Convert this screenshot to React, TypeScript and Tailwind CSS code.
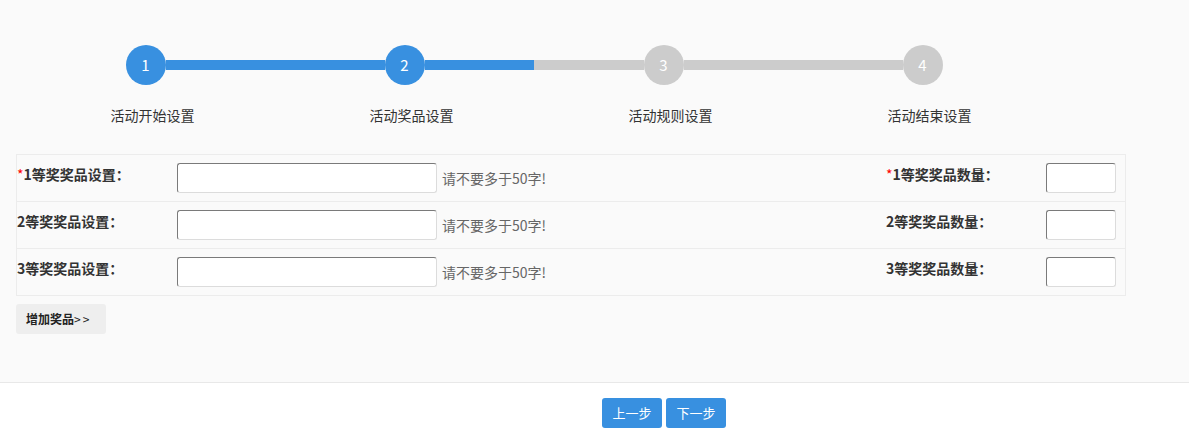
import React from "react";

const STEPS = [
  { n: 1, label: "活动开始设置", left: "", right: "blue" },
  { n: 2, label: "活动奖品设置", left: "blue", right: "blue" },
  { n: 3, label: "活动规则设置", left: "gray", right: "gray" },
  { n: 4, label: "活动结束设置", left: "gray", right: "" },
];

const PRIZES = [
  { rank: 1, required: true },
  { rank: 2, required: false },
  { rank: 3, required: false },
];

function lineClass(c: string) {
  if (c === "blue") return "h-[10px] flex-1 bg-[#3890e0]";
  if (c === "gray") return "h-[10px] flex-1 bg-[#cccccc]";
  return "h-[10px] flex-1";
}

function Steps() {
  return (
    <div className="flex pl-4 pt-[45px]">
      {STEPS.map((s) => (
        <div key={s.n} className="w-[259px] flex flex-col">
          <div className="flex items-center">
            <div className={lineClass(s.left)} />
            <div
              className={
                "w-10 h-10 rounded-full flex items-center justify-center text-white text-[15px] " +
                (s.n <= 2 ? "bg-[#3890e0]" : "bg-[#cccccc]")
              }
            >
              {s.n}
            </div>
            <div className={lineClass(s.right)} />
          </div>
          <div className="mt-5 pl-[14px] text-center text-[14px] leading-5 text-[#333]">
            {s.label}
          </div>
        </div>
      ))}
    </div>
  );
}

function Input({ w }: { w: string }) {
  return (
    <input
      type="text"
      className={
        w +
        " h-[30px] bg-white rounded-[3px] border border-t-[#7a7a7a] border-l-[#7a7a7a] border-r-[#dcdcdc] border-b-[#dcdcdc] outline-none"
      }
    />
  );
}

export default function App() {
  return (
    <div
      className="w-[1189px] h-[439px] bg-white"
      style={{ fontFamily: '"Noto Sans CJK SC", "Noto Sans", sans-serif' }}
    >
      <div className="h-[383px] bg-[#fafafa] border-b border-[#e8e8e8]">
        <Steps />

        {/* prize table */}
        <div className="mt-[29px] ml-4 w-[1110px] border border-[#ececec] divide-y divide-[#ececec]">
          {PRIZES.map((p) => (
            <div key={p.rank} className="flex pt-2 pb-2">
              <div className="w-[160px] leading-[22px] text-[14px] font-bold text-[#333]">
                {p.required && <span className="text-[#f00] font-normal">*</span>}
                {p.rank}等奖奖品设置<span className="tracking-[6px]">：</span>
              </div>
              <div className="w-[709px] flex items-center">
                <Input w="w-[260px]" />
                <span className="ml-[5px] text-[14px] text-[#666]">请不要多于50字!</span>
              </div>
              <div className="w-[160px] leading-[22px] text-[14px] font-bold text-[#333]">
                {p.required && <span className="text-[#f00] font-normal">*</span>}
                {p.rank}等奖奖品数量<span className="tracking-[6px]">：</span>
              </div>
              <Input w="w-[70px]" />
            </div>
          ))}
        </div>

        <button className="mt-[8px] ml-4 w-[90px] h-[30px] rounded-[3px] bg-[#eeeeee] text-[12px] font-bold text-[#222] text-left pl-[10px]">
          增加奖品<span className="tracking-[2px] font-normal">&gt;&gt;</span>
        </button>
      </div>

      <div className="flex justify-center gap-1 pt-[15px] pl-[139px]">
        <button className="w-[60px] h-[30px] rounded-[3px] bg-[#3890e0] text-white text-[13px]">
          上一步
        </button>
        <button className="w-[60px] h-[30px] rounded-[3px] bg-[#3890e0] text-white text-[13px]">
          下一步
        </button>
      </div>
    </div>
  );
}
